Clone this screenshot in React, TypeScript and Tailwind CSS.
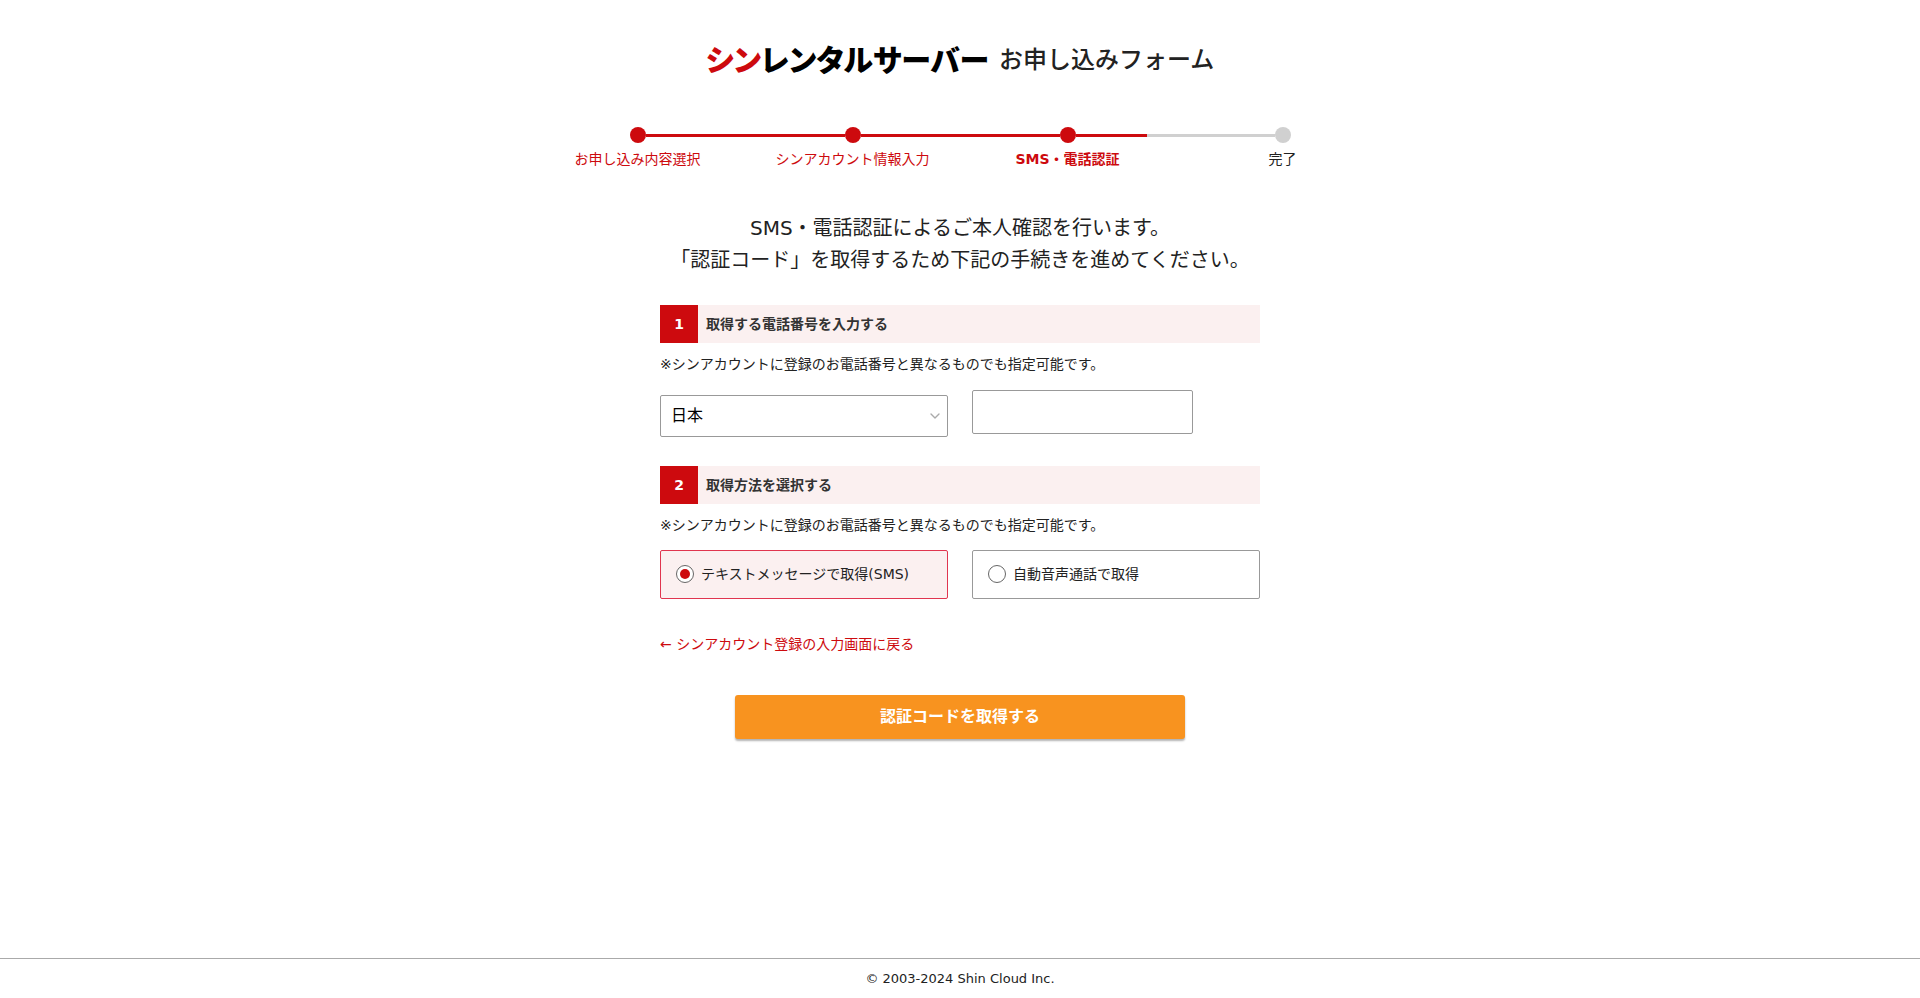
import { useState } from "react";
import { ChevronDown } from "lucide-react";
import clsx from "clsx";

const steps = [
  { label: "お申し込み内容選択", status: "done" },
  { label: "シンアカウント情報入力", status: "done" },
  { label: "SMS・電話認証", status: "current" },
  { label: "完了", status: "todo" },
];

const methods = [
  { value: "sms", label: "テキストメッセージで取得(SMS)" },
  { value: "voice", label: "自動音声通話で取得" },
];

const Header = () => (
  <header className="flex items-center justify-center gap-2.5 pt-[39px] font-['Noto_Sans_CJK_JP',sans-serif]">
    <a
      href="#"
      className="text-[30px] leading-[38px] font-black text-black [font-feature-settings:'palt']"
    >
      <span className="text-[#cd0a0e]">シン</span>レンタルサーバー
    </a>
    <h1 className="text-2xl leading-[38px] font-medium">お申し込みフォーム</h1>
  </header>
);

const Stepper = () => (
  <nav className="mx-auto mt-[50px] w-full max-w-[860px]">
    <ol className="grid grid-cols-4">
      {steps.map((step, i) => (
        <li key={step.label} className="flex flex-col items-center">
          <div className="flex w-full items-center">
            <span
              className={clsx(
                "h-[3px] flex-1",
                (i === 1 || i === 2) && "bg-[#cd0a0e]",
                i === 3 && "bg-[#d0d0d0]"
              )}
            />
            <span
              className={clsx(
                "size-4 rounded-full",
                step.status === "todo" ? "bg-[#d0d0d0]" : "bg-[#cd0a0e]"
              )}
            />
            <span
              className={clsx(
                "flex h-[3px] flex-1",
                i < 2 && "bg-[#cd0a0e]",
                i === 2 && "bg-[#d0d0d0]"
              )}
            >
              {i === 2 && <span className="h-full w-[72%] bg-[#cd0a0e]" />}
            </span>
          </div>
          <span
            className={clsx(
              "mt-1.5 text-sm leading-5",
              step.status !== "todo" && "text-[#cd0a0e]",
              step.status === "current" && "font-bold"
            )}
          >
            {step.label}
          </span>
        </li>
      ))}
    </ol>
  </nav>
);

interface SectionTitleProps {
  number: number;
  title: string;
}

const SectionTitle = ({ number, title }: SectionTitleProps) => (
  <>
    <h2 className="flex h-[38px] items-center bg-[#fbf0f0] text-sm font-bold text-[#333]">
      <span className="flex size-[38px] items-center justify-center bg-[#cd0a0e] text-white">
        {number}
      </span>
      <span className="ml-2">{title}</span>
    </h2>
    <p className="mt-[11px] text-sm leading-5">
      ※シンアカウントに登録のお電話番号と異なるものでも指定可能です。
    </p>
  </>
);

const App = () => {
  const [method, setMethod] = useState("sms");
  const [phone, setPhone] = useState("");

  return (
    <div className="flex min-h-screen flex-col bg-white font-['DejaVu_Sans','Noto_Sans_CJK_JP',sans-serif] text-[#222]">
      <Header />
      <Stepper />

      <main className="mx-auto w-full max-w-[600px] flex-1">
        <p className="mt-[43px] text-center text-xl leading-8 whitespace-nowrap">
          SMS・電話認証によるご本人確認を行います。
          <br />
          「認証コード」を取得するため下記の手続きを進めてください。
        </p>

        <form onSubmit={(e) => e.preventDefault()}>
          <section className="mt-[29px]">
            <SectionTitle number={1} title="取得する電話番号を入力する" />
            <div className="mt-4 grid grid-cols-2 gap-6">
              <div className="mt-[5px] grid items-center">
                <select
                  aria-label="国"
                  className="col-start-1 row-start-1 h-[42px] w-full appearance-none rounded-xs border border-[#999] bg-white px-2.5 text-base text-black"
                >
                  <option>日本</option>
                </select>
                <ChevronDown
                  className="pointer-events-none col-start-1 row-start-1 mr-[5px] size-4 justify-self-end text-[#aaa]"
                  strokeWidth={2}
                />
              </div>
              <input
                type="tel"
                aria-label="電話番号"
                value={phone}
                onChange={(e) => setPhone(e.target.value)}
                className="h-11 w-[221px] rounded-xs border border-[#999] px-2.5 text-base"
              />
            </div>
          </section>

          <section className="mt-[29px]">
            <SectionTitle number={2} title="取得方法を選択する" />
            <div className="mt-[15px] grid grid-cols-2 gap-6">
              {methods.map((m) => (
                <label
                  key={m.value}
                  className={clsx(
                    "flex h-[49px] items-center gap-[7px] rounded-xs border px-[15px] pb-px text-sm",
                    method === m.value
                      ? "border-[#e0354f] bg-[#fbf0f0]"
                      : "border-[#999]"
                  )}
                >
                  <input
                    type="radio"
                    name="method"
                    value={m.value}
                    checked={method === m.value}
                    onChange={() => setMethod(m.value)}
                    className="grid size-[18px] appearance-none place-items-center rounded-full border border-[#666] bg-white before:size-2.5 before:rounded-full checked:before:bg-[#cd0a0e]"
                  />
                  {m.label}
                </label>
              ))}
            </div>
          </section>

          <a href="#" className="mt-[35px] block text-sm leading-5 text-[#cd0a0e]">
            ← シンアカウント登録の入力画面に戻る
          </a>

          <button
            type="submit"
            className="mx-auto mt-[41px] block h-11 w-full max-w-[450px] rounded-[3px] bg-[#f8931f] text-base font-bold text-white shadow-[0_2px_2px_rgba(0,0,0,0.3)]"
          >
            認証コードを取得する
          </button>
        </form>
      </main>

      <footer className="h-10 border-t border-[#aaa] pt-2.5 text-center text-[13px] leading-5">
        © 2003-2024 Shin Cloud Inc.
      </footer>
    </div>
  );
};

export default App;
